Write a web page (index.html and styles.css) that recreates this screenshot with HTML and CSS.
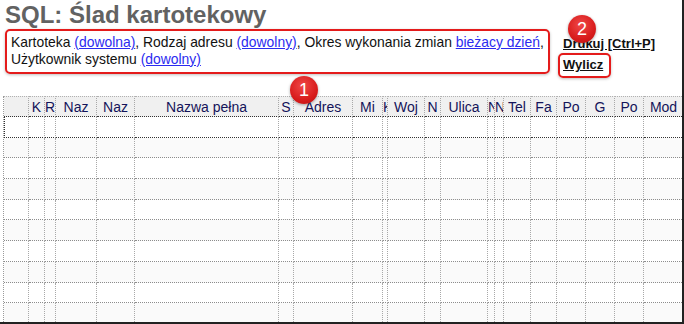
FILE: index.html
```html
<!DOCTYPE html>
<html>
<head>
<meta charset="utf-8">
<link rel="stylesheet" href="styles.css">
</head>
<body>
<div class="frame">
  <h1 class="title">SQL: Ślad kartotekowy</h1>

  <div class="top">
    <div class="filters">
      Kartoteka <a href="#">(dowolna)</a>, Rodzaj adresu <a href="#">(dowolny)</a>, Okres wykonania zmian <a href="#">bieżacy dzień</a>,
      Użytkownik systemu <a href="#">(dowolny)</a>
    </div>
    <div class="actions">
      <a class="action" href="#">Drukuj [Ctrl+P]</a>
      <a class="action calc" href="#">Wylicz</a>
    </div>
  </div>

  <div class="grid-wrap">
    <table class="grid">
      <thead>
        <tr>
          <th></th><th>K</th><th>R</th><th>Naz</th><th>Naz</th><th>Nazwa pełna</th><th>S</th><th>Adres</th><th>Mi</th><th>K</th><th>Woj</th><th>N</th><th>Ulica</th><th>N</th><th>N</th><th>Tel</th><th>Fa</th><th>Po</th><th>G</th><th>Po</th><th>Mod</th><th></th>
        </tr>
      </thead>
      <tbody id="rows"></tbody>
    </table>
  </div>

  <span class="badge badge-one">1</span>
  <span class="badge badge-two">2</span>
</div>

<script>
var body = document.getElementById("rows");
var cols = document.querySelectorAll(".grid thead th").length;
for (var r = 0; r < 10; r++) {
  var tr = document.createElement("tr");
  if (r == 0) {
    tr.className = "current";
  }
  for (var c = 0; c < cols; c++) {
    tr.appendChild(document.createElement("td"));
  }
  body.appendChild(tr);
}
</script>
</body>
</html>
```

FILE: styles.css
```css
html, body {
  margin: 0;
  padding: 0;
  background: #fff;
}

.frame {
  position: relative;
  box-sizing: border-box;
  width: 684px;
  height: 324px;
  overflow: hidden;
  border-right: 2px solid #222;
  border-bottom: 2px solid #222;
  font-family: "Liberation Sans", Arial, sans-serif;
}

.title {
  margin: 0;
  padding: 2px 0 0 5px;
  font-size: 24px;
  line-height: 26px;
  font-weight: bold;
  color: #626262;
}

.top {
  display: flex;
  align-items: flex-start;
  padding: 1px 0 0 5px;
}

.filters {
  width: 537px;
  height: 38px;
  padding: 3px 0 0 4px;
  border: 2px solid #e41b1b;
  border-radius: 5px;
  box-shadow: 0 1px 3px rgba(0, 0, 0, 0.25);
  font-size: 13.9px;
  line-height: 16.5px;
  color: #111;
}

.filters a {
  color: #2b2bf0;
}

.actions {
  display: flex;
  flex-direction: column;
  align-items: flex-start;
  margin: 7px 0 0 9px;
}

.action {
  font-size: 13px;
  font-weight: bold;
  color: #111;
  line-height: 16px;
  padding: 0 0 0 4px;
}

.calc {
  margin-top: 1px;
  padding: 2px 6px 3px 3px;
  margin-left: -1px;
  border: 2px solid #e41b1b;
  border-radius: 5px;
  box-shadow: 0 1px 3px rgba(0, 0, 0, 0.25);
}

.grid-wrap {
  margin: 18px 0 0 3px;
  overflow: hidden;
}

.grid {
  table-layout: fixed;
  border-collapse: separate;
  border-spacing: 0;
  width: 717px;
  border-left: 1px dotted #9a9a9a;
}

.grid th,
.grid td {
  box-sizing: border-box;
  padding: 0;
  border-right: 1px dotted #a8a8a8;
  border-bottom: 1px dotted #8c8c8c;
  overflow: hidden;
  white-space: nowrap;
}

.grid th {
  height: 21px;
  padding-top: 1px;
  border-top: 1px dotted #b0b0b0;
  background: #f0f0f0;
  color: #14145a;
  font-size: 14px;
  font-weight: normal;
  text-align: center;
}

.grid td {
  height: 20.7px;
}

.grid tbody tr:nth-child(even) td {
  background: #fafafa;
}

.grid tr.current td {
  border-bottom-color: #333;
}

.grid tr.current td:first-child {
  border-left: 1px dotted #333;
}

.grid thead th {
  border-bottom-color: #333;
}

.grid th:nth-child(1) { width: 25px; }
.grid th:nth-child(2) { width: 16px; }
.grid th:nth-child(3) { width: 11px; }
.grid th:nth-child(4) { width: 41px; }
.grid th:nth-child(5) { width: 38px; }
.grid th:nth-child(6) { width: 144px; }
.grid th:nth-child(7) { width: 15px; }
.grid th:nth-child(8) { width: 59px; }
.grid th:nth-child(9) { width: 30px; }
.grid th:nth-child(10) { width: 5px; }
.grid th:nth-child(11) { width: 37px; }
.grid th:nth-child(12) { width: 16px; }
.grid th:nth-child(13) { width: 47px; }
.grid th:nth-child(14) { width: 7px; }
.grid th:nth-child(15) { width: 9px; }
.grid th:nth-child(16) { width: 27px; }
.grid th:nth-child(17) { width: 26px; }
.grid th:nth-child(18) { width: 29px; }
.grid th:nth-child(19) { width: 29px; }
.grid th:nth-child(20) { width: 29px; }
.grid th:nth-child(21) { width: 40px; }
.grid th:nth-child(22) { width: 36px; }

.badge {
  position: absolute;
  width: 28px;
  height: 28px;
  border-radius: 50%;
  background: radial-gradient(circle at 45% 35%, #f04848 0%, #d81c1c 60%, #b81010 100%);
  box-shadow: 0 1px 3px rgba(0, 0, 0, 0.35);
  color: #fff;
  font-size: 18px;
  line-height: 28px;
  text-align: center;
}

.badge-one {
  left: 290px;
  top: 76px;
}

.badge-two {
  left: 568px;
  top: 15px;
}
```
